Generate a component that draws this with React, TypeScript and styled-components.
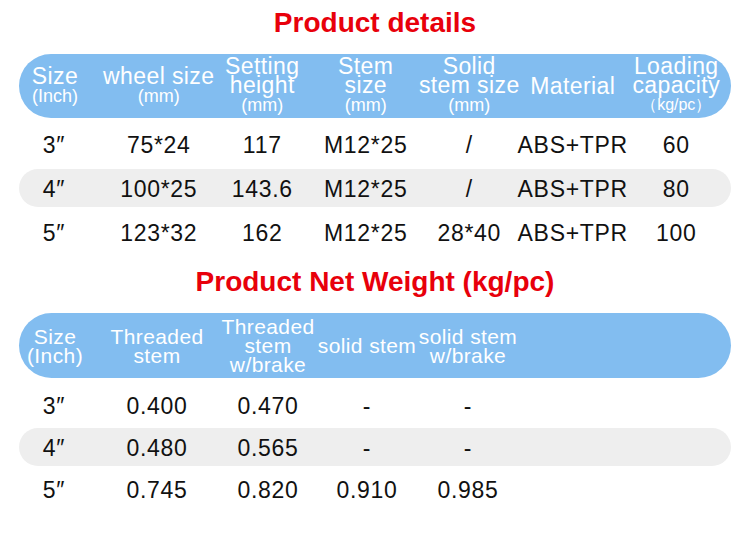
import React from "react";
import styled, { createGlobalStyle } from "styled-components";

const GlobalStyle = createGlobalStyle`
    html, body {
        margin: 0;
        padding: 0;
        background: #ffffff;
    }
    body {
        font-family: "Liberation Sans", Arial, sans-serif;
    }
`;

const Page = styled.div`
    width: 750px;
    height: 540px;
    box-sizing: border-box;
    padding: 7px 19px 0 19px;
    display: flex;
    flex-direction: column;
`;

const Title = styled.h2`
    margin: 0 0 15px 0;
    font-size: 28px;
    line-height: 32px;
    font-weight: bold;
    color: #e8000b;
    text-align: center;
`;

const Section = styled.section<{ $last?: boolean }>`
    display: flex;
    flex-direction: column;
    margin-bottom: ${(p) => (p.$last ? 0 : 15)}px;
`;

const HeaderBar = styled.div<{ $cols: string; $height: number }>`
    display: grid;
    grid-template-columns: ${(p) => p.$cols};
    height: ${(p) => p.$height}px;
    border-radius: 33px;
    background: #82bdf0;
    color: #ffffff;
`;

const HeadCell = styled.div<{ $size: number }>`
    display: flex;
    flex-direction: column;
    align-items: center;
    justify-content: center;
    font-size: ${(p) => p.$size}px;
    letter-spacing: 0.4px;
    white-space: nowrap;
    &:first-child {
        padding-right: 16px;
    }
`;

const Line = styled.span`
    display: block;
    height: 19px;
    line-height: 19px;
`;

const Sub = styled.span<{ $size: number }>`
    display: block;
    height: 20px;
    font-size: ${(p) => p.$size}px;
    line-height: 20px;
    letter-spacing: 0;
`;

const Rows = styled.div<{ $gap: number; $top: number }>`
    display: flex;
    flex-direction: column;
    gap: ${(p) => p.$gap}px;
    margin-top: ${(p) => p.$top}px;
`;

const Row = styled.div<{ $cols: string; $shaded?: boolean }>`
    display: grid;
    grid-template-columns: ${(p) => p.$cols};
    height: 38px;
    border-radius: 19px;
    background: ${(p) => (p.$shaded ? "#eeeeee" : "transparent")};
`;

const Cell = styled.div`
    display: flex;
    align-items: center;
    justify-content: center;
    padding-top: 3px;
    font-size: 23px;
    letter-spacing: 0.7px;
    color: #111111;
    white-space: nowrap;
    &:first-child {
        padding-right: 18px;
    }
`;

type Head = { lines: string[]; sub?: string };

const detailCols = "88px repeat(6, 103.5px)";
const weightCols = "88px 100px 122px 76px 126px";

const detailHead: Head[] = [
    { lines: ["Size"], sub: "(Inch)" },
    { lines: ["wheel size"], sub: "(mm)" },
    { lines: ["Setting", "height"], sub: "(mm)" },
    { lines: ["Stem", "size"], sub: "(mm)" },
    { lines: ["Solid", "stem size"], sub: "(mm)" },
    { lines: ["Material"] },
    { lines: ["Loading", "capacity"], sub: "（kg/pc）" },
];

const detailRows = [
    ["3″", "75*24", "117", "M12*25", "/", "ABS+TPR", "60"],
    ["4″", "100*25", "143.6", "M12*25", "/", "ABS+TPR", "80"],
    ["5″", "123*32", "162", "M12*25", "28*40", "ABS+TPR", "100"],
];

const weightHead: Head[] = [
    { lines: ["Size", "(Inch)"] },
    { lines: ["Threaded", "stem"] },
    { lines: ["Threaded", "stem", "w/brake"] },
    { lines: ["solid stem"] },
    { lines: ["solid stem", "w/brake"] },
];

const weightRows = [
    ["3″", "0.400", "0.470", "-", "-"],
    ["4″", "0.480", "0.565", "-", "-"],
    ["5″", "0.745", "0.820", "0.910", "0.985"],
];

const Table = ({
    cols,
    head,
    rows,
    headSize,
    barHeight,
    gap,
    top,
}: {
    cols: string;
    head: Head[];
    rows: string[][];
    headSize: number;
    barHeight: number;
    gap: number;
    top: number;
}) => (
    <>
        <HeaderBar $cols={cols} $height={barHeight}>
            {head.map((h, i) => (
                <HeadCell key={i} $size={headSize}>
                    {h.lines.map((l) => (
                        <Line key={l}>{l}</Line>
                    ))}
                    {h.sub && <Sub $size={h.sub.startsWith("（") ? 16 : 18}>{h.sub}</Sub>}
                </HeadCell>
            ))}
        </HeaderBar>
        <Rows $gap={gap} $top={top}>
            {rows.map((r, i) => (
                <Row key={i} $cols={cols} $shaded={i === 1}>
                    {r.map((c, j) => (
                        <Cell key={j}>{c}</Cell>
                    ))}
                </Row>
            ))}
        </Rows>
    </>
);

const App = () => {
    return (
        <>
            <GlobalStyle />
            <Page>
                <Section>
                    <Title>Product details</Title>
                    <Table
                        cols={detailCols}
                        head={detailHead}
                        rows={detailRows}
                        headSize={23}
                        barHeight={64}
                        gap={6}
                        top={7}
                    />
                </Section>
                <Section $last>
                    <Title>Product Net Weight (kg/pc)</Title>
                    <Table
                        cols={weightCols}
                        head={weightHead}
                        rows={weightRows}
                        headSize={21}
                        barHeight={65}
                        gap={4}
                        top={8}
                    />
                </Section>
            </Page>
        </>
    );
};

export default App;
